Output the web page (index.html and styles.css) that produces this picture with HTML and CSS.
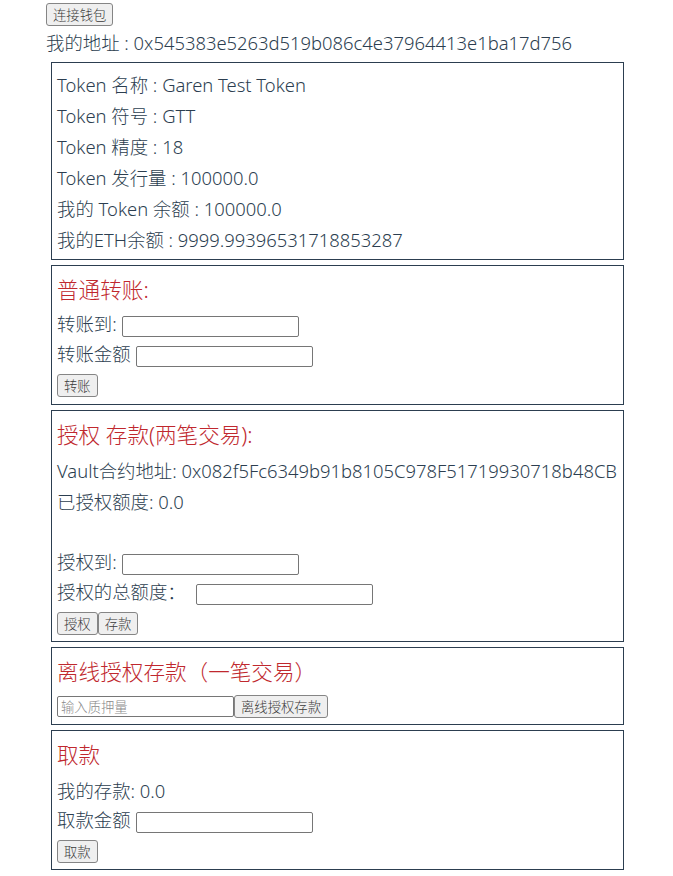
FILE: index.html
```html
<!DOCTYPE html>
<html lang="zh-CN">
<head>
<meta charset="utf-8">
<title>Vault</title>
<link rel="stylesheet" href="styles.css">
</head>
<body>
<div class="app">
  <button class="btn btn-block">连接钱包</button>
  <div class="row">我的地址 : 0x545383e5263d519b086c4e37964413e1ba17d756</div>

  <div class="box">
    <div class="row">Token 名称 : Garen Test Token</div>
    <div class="row">Token 符号 : GTT</div>
    <div class="row">Token 精度 : 18</div>
    <div class="row">Token 发行量 : 100000.0</div>
    <div class="row">我的 Token 余额 : 100000.0</div>
    <div class="row">我的ETH余额 : 9999.99396531718853287</div>
  </div>

  <div class="box">
    <div class="title">普通转账:</div>
    <div class="field">转账到: <input class="input" type="text"></div>
    <div class="field">转账金额 <input class="input" type="text"></div>
    <div class="actions actions-tall"><button class="btn">转账</button></div>
  </div>

  <div class="box">
    <div class="title">授权 存款(两笔交易):</div>
    <div class="row">Vault合约地址: 0x082f5Fc6349b91b8105C978F51719930718b48CB</div>
    <div class="row">已授权额度: 0.0</div>
    <div class="row"></div>
    <div class="field">授权到: <input class="input" type="text"></div>
    <div class="field">授权的总额度： <input class="input input-wide-gap" type="text"></div>
    <div class="actions"><button class="btn">授权</button><button class="btn">存款</button></div>
  </div>

  <div class="box">
    <div class="title">离线授权存款（一笔交易）</div>
    <div class="inline-row"><input class="input input-flush" type="text" placeholder="输入质押量"><button class="btn">离线授权存款</button></div>
  </div>

  <div class="box">
    <div class="title">取款</div>
    <div class="row">我的存款: 0.0</div>
    <div class="field">取款金额 <input class="input" type="text"></div>
    <div class="actions"><button class="btn">取款</button></div>
  </div>
</div>
</body>
</html>
```

FILE: styles.css
```css
html, body {
  margin: 0;
  padding: 0;
  background: #ffffff;
}

body {
  font-family: "Noto Sans", "Noto Sans CJK SC", sans-serif;
  font-size: 18.4px;
  font-weight: 300;
  color: #2c3e50;
}

.app {
  width: 583px;
  margin-left: 46px;
  padding-top: 3px;
}

.row {
  height: 31px;
  line-height: 33px;
  white-space: nowrap;
}

.box {
  margin: 5px;
  padding: 5px;
  border: 1px solid #2c3e50;
}

.title {
  height: 38px;
  line-height: 38px;
  font-size: 21.6px;
  color: #c0282e;
  white-space: nowrap;
}

.field {
  height: 30px;
  line-height: 30px;
  white-space: nowrap;
}

.actions {
  margin-top: 5px;
  margin-bottom: 1px;
  display: flex;
}

.actions-tall {
  margin-bottom: 2px;
}

.inline-row {
  margin-top: 4px;
  margin-bottom: 1px;
  display: flex;
  align-items: center;
}

.btn {
  box-sizing: border-box;
  height: 23px;
  margin: 0;
  padding: 0 6px;
  font-family: "Noto Sans CJK SC", sans-serif;
  font-size: 13.33px;
  font-weight: 300;
  line-height: 20px;
  color: #3a3a3a;
  background: #efefef;
  border: 1px solid #858585;
  border-radius: 3px;
  vertical-align: top;
}

.btn-block {
  display: block;
}

.input {
  box-sizing: border-box;
  width: 177px;
  height: 21px;
  margin: 0 0 0 1px;
  padding: 1px 3px;
  font-family: "Noto Sans CJK SC", sans-serif;
  font-size: 13.33px;
  font-weight: 300;
  color: #2c3e50;
  background: #ffffff;
  border: 1px solid #767676;
  border-radius: 2px;
  vertical-align: middle;
}

.input-flush {
  margin-left: 0;
}

.input::placeholder {
  color: #8a8a8a;
}

.input-wide-gap {
  margin-left: 5px;
}
```
